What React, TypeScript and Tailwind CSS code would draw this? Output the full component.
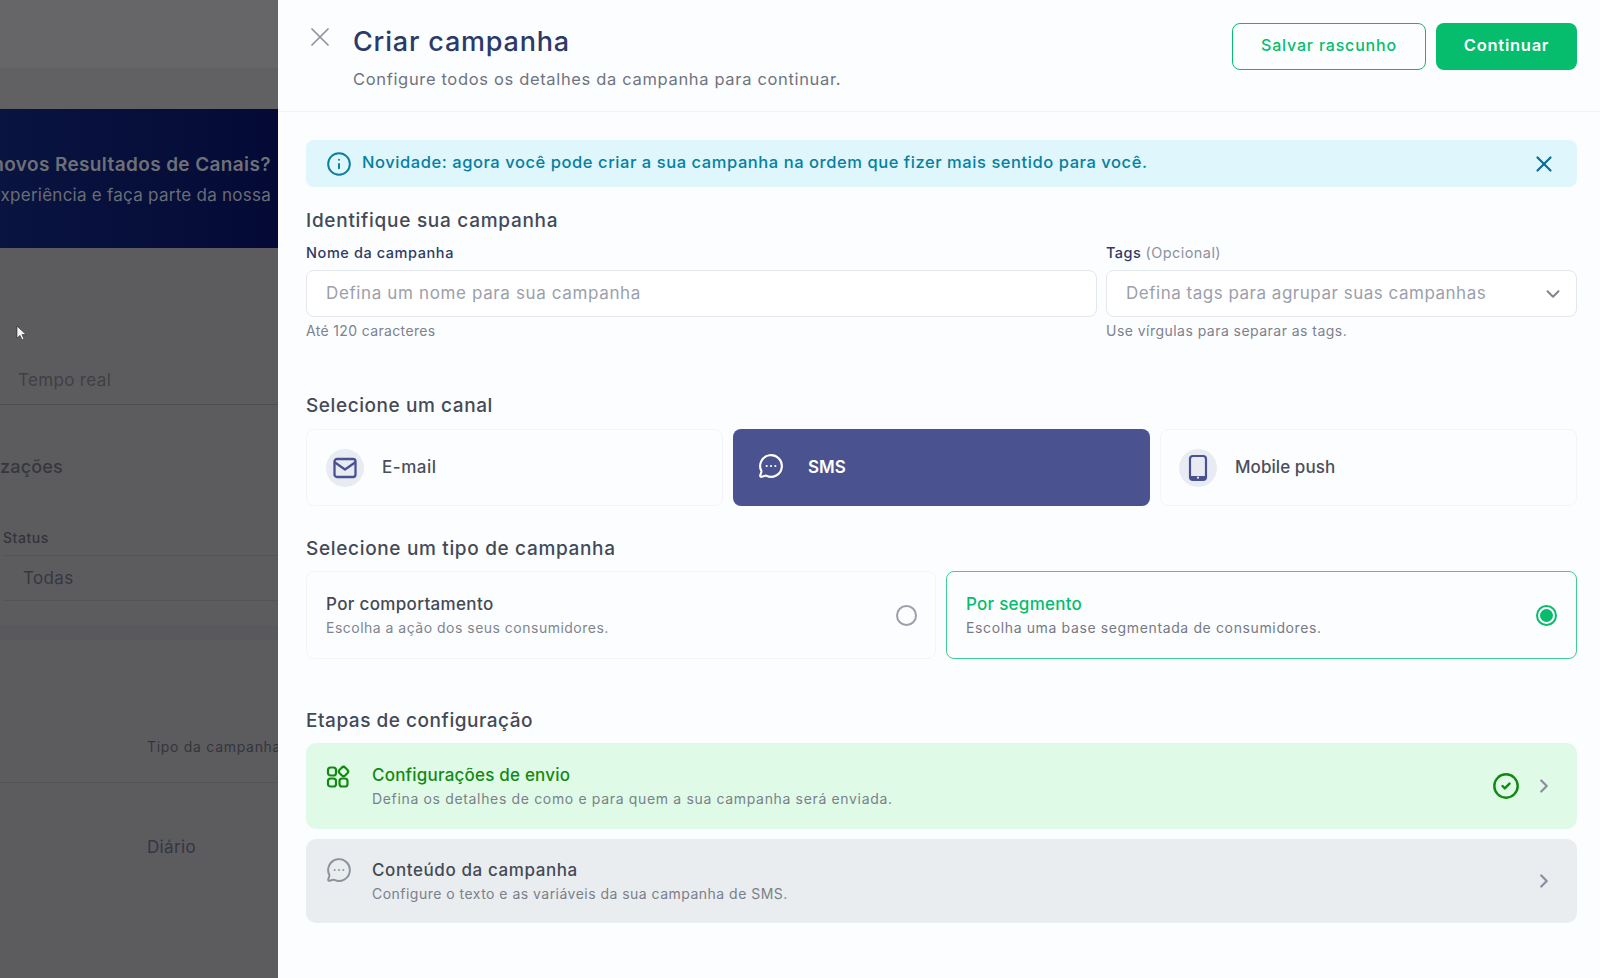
import React from "react";
import { X, Info, ChevronDown, ChevronRight, MessageCircleMore, CircleCheck } from "lucide-react";

function MailIcon() {
  return (
    <svg width="24" height="24" viewBox="0 0 24 24" fill="none" stroke="#4a5190" strokeWidth="2.3" strokeLinejoin="round" strokeLinecap="round">
      <rect x="1.5" y="3" width="21" height="18" rx="2.5" />
      <path d="M2 6.5l10 7 10-7" />
    </svg>
  );
}

function PhoneIcon() {
  return (
    <svg width="24" height="28" viewBox="0 0 24 28" fill="none">
      <rect x="4" y="2" width="16" height="24" rx="3" stroke="#4a5190" strokeWidth="2.2" />
      <path d="M4 22h16v1a3 3 0 0 1-3 3H7a3 3 0 0 1-3-3z" fill="#4a5190" />
      <circle cx="12" cy="23.7" r="1.1" fill="#e9ebf3" />
    </svg>
  );
}

function StepsIcon() {
  return (
    <svg width="24" height="24" viewBox="0 0 24 24" fill="none" stroke="#128a12" strokeWidth="2.2">
      <rect x="2" y="2.5" width="8" height="8" rx="2.6" />
      <rect x="2" y="13.5" width="8" height="8" rx="2.6" />
      <rect x="13.5" y="13.5" width="8" height="8" rx="2.6" />
      <rect x="13.5" y="2.5" width="8" height="8" rx="2.6" transform="rotate(45 17.5 6.5)" />
    </svg>
  );
}

export default function App() {
  return (
    <div className="flex h-[978px] w-[1600px] overflow-hidden font-['Inter','Liberation_Sans',sans-serif] bg-[#fcfdff]">
      <aside className="relative flex w-[278px] shrink-0 flex-col overflow-hidden bg-[#5c5c5f]">
        <div className="h-[68px] bg-[#666668]" />
        <div className="h-[41px] bg-[#616163]" />
        <div className="flex h-[139px] flex-col items-end overflow-hidden bg-gradient-to-r from-[#0a1440] to-[#040a35] pr-[7px] pt-[42px]">
          <p className="whitespace-nowrap text-[19px] font-semibold leading-[28px] tracking-[0.02em] text-[#6e7078]">novos Resultados de Canais?</p>
          <p className="mt-[2px] whitespace-nowrap text-[17px] leading-[28px] tracking-[0.015em] text-[#6b6d76]">experiência e faça parte da nossa</p>
        </div>
        <div className="mt-[120px] h-[37px] border-b border-[#4d4d51] pl-[18px] text-[17px] leading-[24px] tracking-[0.02em] text-[#3f4044]">Tempo real</div>
        <div className="mt-[48px] text-[18px] font-medium leading-[28px] tracking-[0.01em] text-[#36373c]">zações</div>
        <div className="mt-[47px] pl-[3px] text-[14px] font-medium leading-[20px] tracking-[0.04em] text-[#323338]">Status</div>
        <div className="ml-[4px] mt-[7px] h-[46px] border-y border-[#545458] pl-[19px] text-[17px] leading-[44px] tracking-[0.02em] text-[#36373f]">Todas</div>
        <div className="mt-[24px] h-[15px] bg-[#59595d]" />
        <div className="mt-[97px] whitespace-nowrap pl-[147px] text-[14px] leading-[20px] tracking-[0.05em] text-[#34353b]">Tipo da campanha</div>
        <div className="mt-[25px] h-px bg-[#545458]" />
        <div className="mt-[52px] pl-[147px] text-[17px] leading-[24px] tracking-[0.02em] text-[#323646]">Diário</div>
        <svg className="absolute left-[16px] top-[325px]" width="11" height="17" viewBox="0 0 11 17">
          <path d="M1 1v12l3-2.6 2 4.6 2-1-2-4.4h4z" fill="#f4f4f4" stroke="#222" strokeWidth="0.6" />
        </svg>
      </aside>

      <main className="flex-1 bg-[#fcfdff]">
        <header className="flex h-[112px] items-start border-b border-[#f1f3f6] pl-[26px] pr-[23px]">
          <button className="mt-[21px] flex h-8 w-8 items-center justify-center text-[#8d929c]">
            <X size={32} strokeWidth={1.3} />
          </button>
          <div className="ml-[17px] flex-1">
            <h1 className="mt-[24px] text-[27px] font-medium leading-[36px] tracking-[0.03em] text-[#2b3a67]">Criar campanha</h1>
            <p className="mt-[7px] text-[16.5px] leading-[24px] tracking-[0.04em] text-[#6f7480]">Configure todos os detalhes da campanha para continuar.</p>
          </div>
          <div className="mt-[23px] flex gap-[10px]">
            <button className="h-[47px] w-[194px] rounded-[8px] border border-[#05bd6c] pb-[3px] text-[16px] font-medium tracking-[0.05em] text-[#05bd6c]">Salvar rascunho</button>
            <button className="h-[47px] w-[141px] rounded-[8px] bg-[#05bd6c] pb-[3px] text-[16.5px] font-semibold tracking-[0.045em] text-white">Continuar</button>
          </div>
        </header>

        <div className="pl-[28px] pr-[23px]">
          <div className="mt-[28px] flex h-[47px] items-center rounded-[8px] bg-[#def6fc] pl-[20px] pr-[20px]">
            <Info size={26} strokeWidth={1.8} className="text-[#0b7f9e]" />
            <p className="ml-[10px] flex-1 pb-[2px] text-[16.5px] font-medium tracking-[0.034em] text-[#06809f]">Novidade: agora você pode criar a sua campanha na ordem que fizer mais sentido para você.</p>
            <X size={26} strokeWidth={2} className="text-[#0b6d8f]" />
          </div>

          <h2 className="mt-[20px] text-[19px] font-medium leading-[28px] tracking-[0.038em] text-[#444a55]">Identifique sua campanha</h2>
          <div className="mt-[8px] grid grid-cols-[791px_471px] gap-x-[9px]">
            <div>
              <label className="block text-[14.5px] font-medium leading-[20px] tracking-[0.04em] text-[#2f3b63]">Nome da campanha</label>
              <div className="mt-[7px] flex h-[47px] items-center rounded-[8px] border border-[#e4e7eb] bg-white pl-[19px] text-[17px] tracking-[0.037em] text-[#9ba0ab]">Defina um nome para sua campanha</div>
              <p className="mt-[4px] text-[14px] leading-[20px] tracking-[0.025em] text-[#7d828d]">Até 120 caracteres</p>
            </div>
            <div>
              <label className="block text-[14.5px] font-medium leading-[20px] tracking-[0.03em] text-[#2f3b63]">Tags <span className="font-normal text-[#8d929d]">(Opcional)</span></label>
              <div className="mt-[7px] flex h-[47px] items-center justify-between rounded-[8px] border border-[#e4e7eb] bg-white pl-[19px] pr-[12px] text-[17px] tracking-[0.03em] text-[#9ba0ab]">
                <span>Defina tags para agrupar suas campanhas</span>
                <ChevronDown size={22} strokeWidth={2.2} className="text-[#80858f]" />
              </div>
              <p className="mt-[4px] text-[14px] leading-[20px] tracking-[0.033em] text-[#7d828d]">Use vírgulas para separar as tags.</p>
            </div>
          </div>

          <h2 className="mt-[51px] text-[19px] font-medium leading-[28px] tracking-[0.03em] text-[#444a55]">Selecione um canal</h2>
          <div className="mt-[9px] grid grid-cols-3 gap-[10px]">
            <div className="flex h-[77px] items-center rounded-[8px] border border-[#f3f5f8] pl-[19px]">
              <span className="flex h-[38px] w-[38px] items-center justify-center rounded-full bg-[#e9ebf3]"><MailIcon /></span>
              <span className="ml-[18px] text-[17px] font-medium tracking-[0.03em] text-[#4a4f5a]">E-mail</span>
            </div>
            <div className="flex h-[77px] items-center rounded-[8px] bg-[#4b5290] pl-[25px]">
              <span className="-mt-[4px]"><MessageCircleMore size={26} strokeWidth={2} className="text-white" /></span>
              <span className="ml-[24px] text-[17px] font-semibold text-white">SMS</span>
            </div>
            <div className="flex h-[77px] items-center rounded-[8px] border border-[#f3f5f8] pl-[18px]">
              <span className="flex h-[38px] w-[38px] items-center justify-center rounded-full bg-[#e9ebf3]"><PhoneIcon /></span>
              <span className="ml-[18px] text-[17px] font-medium tracking-[0.004em] text-[#4a4f5a]">Mobile push</span>
            </div>
          </div>

          <h2 className="mt-[29px] text-[19px] font-medium leading-[28px] tracking-[0.035em] text-[#444a55]">Selecione um tipo de campanha</h2>
          <div className="mt-[8px] grid grid-cols-[630px_631px] gap-[10px]">
            <div className="flex h-[88px] items-center justify-between rounded-[8px] border border-[#f3f5f8] pl-[19px] pr-[18px]">
              <div>
                <p className="text-[17px] font-medium leading-[22px] tracking-[0.02em] text-[#444a55]">Por comportamento</p>
                <p className="mt-[3px] text-[14px] leading-[20px] tracking-[0.035em] text-[#80858f]">Escolha a ação dos seus consumidores.</p>
              </div>
              <span className="h-[21px] w-[21px] rounded-full border-2 border-[#9a9fa9]" />
            </div>
            <div className="flex h-[88px] items-center justify-between rounded-[8px] border border-[#3ccf8e] pl-[19px] pr-[19px]">
              <div>
                <p className="text-[17px] font-medium leading-[22px] tracking-[0.015em] text-[#05bd6c]">Por segmento</p>
                <p className="mt-[3px] text-[14px] leading-[20px] tracking-[0.045em] text-[#757a85]">Escolha uma base segmentada de consumidores.</p>
              </div>
              <span className="flex h-[21px] w-[21px] items-center justify-center rounded-full border-2 border-[#05bd6c]">
                <span className="h-[13px] w-[13px] rounded-full bg-[#05bd6c]" />
              </span>
            </div>
          </div>

          <h2 className="mt-[48px] text-[19px] font-medium leading-[28px] tracking-[0.028em] text-[#444a55]">Etapas de configuração</h2>
          <div className="mt-[8px] flex h-[86px] items-center rounded-[10px] bg-[#dffbe7] pl-[20px] pr-[22px]">
            <span className="-mt-[19px]"><StepsIcon /></span>
            <div className="ml-[22px] flex-1">
              <p className="text-[17px] font-medium leading-[22px] tracking-[0.012em] text-[#128a12]">Configurações de envio</p>
              <p className="mt-[3px] text-[14px] leading-[20px] tracking-[0.047em] text-[#7b808a]">Defina os detalhes de como e para quem a sua campanha será enviada.</p>
            </div>
            <CircleCheck size={28} strokeWidth={2.1} className="text-[#128a12]" />
            <ChevronRight size={22} strokeWidth={2.5} className="ml-[13px] text-[#8d8f9f]" />
          </div>
          <div className="mt-[10px] flex h-[84px] items-center rounded-[10px] bg-[#e9edef] pl-[20px] pr-[22px]">
            <span className="-mt-[23px]"><MessageCircleMore size={26} strokeWidth={1.8} className="text-[#8d929c]" /></span>
            <div className="ml-[20px] flex-1">
              <p className="text-[17px] font-medium leading-[22px] tracking-[0.035em] text-[#444a55]">Conteúdo da campanha</p>
              <p className="mt-[3px] text-[14px] leading-[20px] tracking-[0.034em] text-[#7b808a]">Configure o texto e as variáveis da sua campanha de SMS.</p>
            </div>
            <ChevronRight size={22} strokeWidth={2.5} className="text-[#8d8f9f]" />
          </div>
        </div>
      </main>
    </div>
  );
}
